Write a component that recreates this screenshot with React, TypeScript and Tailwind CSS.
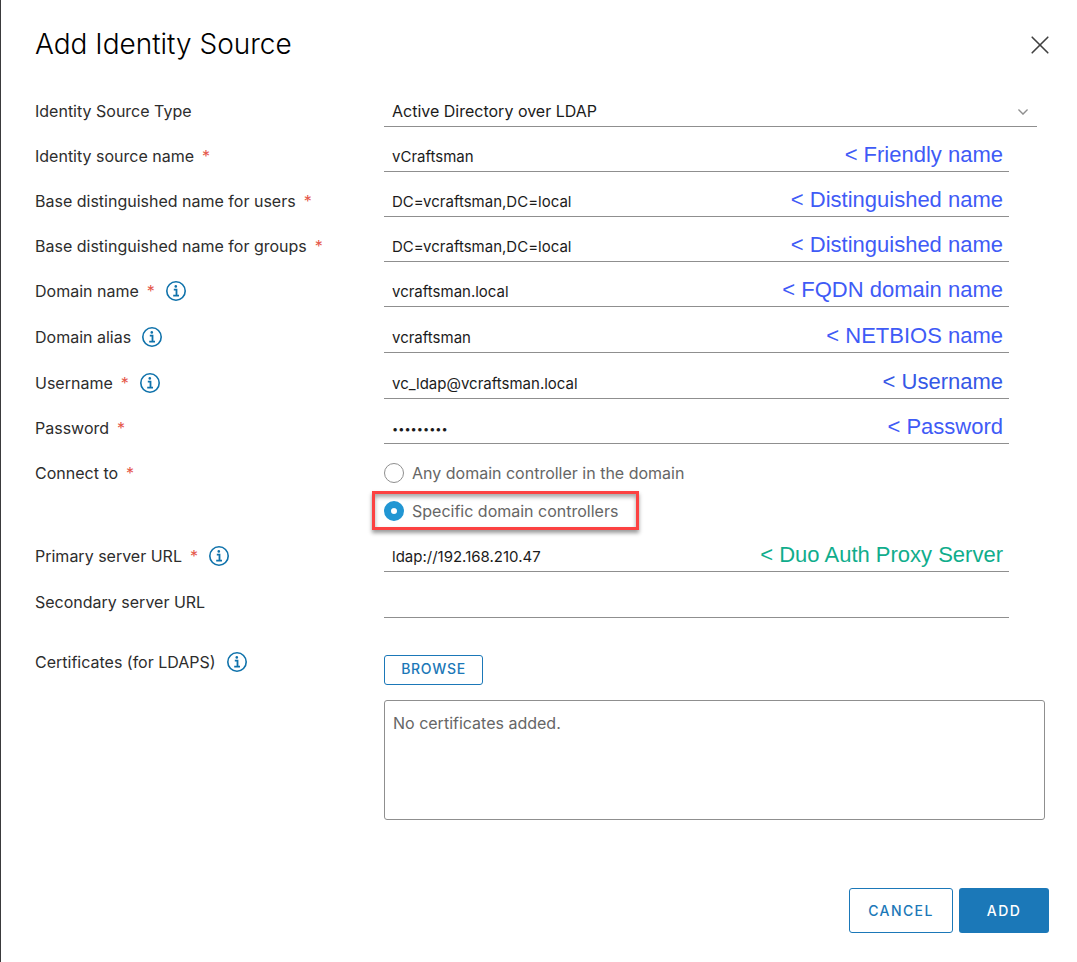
import { useId, useState } from "react";
import type { ReactNode } from "react";

function InfoIcon({ topic }: { topic: string }) {
  return (
    <button type="button" aria-label={`About ${topic}`} className="ml-[11px] shrink-0 text-[#0f72ab]">
      <svg viewBox="0 0 20 20" className="block size-5" fill="none" aria-hidden="true">
        <circle cx="10" cy="10" r="9.2" stroke="currentColor" strokeWidth="1.6" />
        <circle cx="9.8" cy="5.4" r="1.3" fill="currentColor" />
        <path d="M7.8 8.7H10.5V14.4M7.2 14.6H13" stroke="currentColor" strokeWidth="1.8" />
      </svg>
    </button>
  );
}

type CaptionProps = { text: string; required?: boolean; info?: boolean; htmlFor?: string; id?: string };

function Caption({ text, required, info, htmlFor, id }: CaptionProps) {
  const content = (
    <>
      {text}
      {required && <span className="ml-2 text-[#e5574a]">*</span>}
    </>
  );
  return (
    <div className="flex h-6 items-center text-base text-[#2d2d2d]">
      {htmlFor ? <label htmlFor={htmlFor}>{content}</label> : <span id={id}>{content}</span>}
      {info && <InfoIcon topic={text} />}
    </div>
  );
}

function Row({ tall, caption, children }: { tall?: boolean; caption: ReactNode; children: ReactNode }) {
  return (
    <div className={`grid grid-cols-[349px_1fr] items-end ${tall ? "h-[46px]" : "h-[45px]"}`}>
      <div className="pb-1">{caption}</div>
      {children}
    </div>
  );
}

type FieldProps = {
  label: string;
  value: string;
  type?: "text" | "password";
  required?: boolean;
  info?: boolean;
  tall?: boolean;
  note?: string;
  noteColor?: string;
};

function Field({ label, value, type = "text", required, info, tall, note, noteColor = "text-[#3f5bf6]" }: FieldProps) {
  const id = useId();
  return (
    <Row tall={tall} caption={<Caption text={label} required={required} info={info} htmlFor={id} />}>
      <div className="mr-9 flex h-8 items-center border-b border-[#8f8f8f] pr-[6px]">
        <input
          id={id}
          type={type}
          defaultValue={value}
          className={`h-8 min-w-0 flex-1 bg-transparent px-2 pt-[2px] text-[#1b1b1b] outline-none ${type === "password" ? "text-[11px]" : "text-[15px]"}`}
        />
        {note && (
          <span className={`shrink-0 pb-[2px] font-['Liberation_Sans',Arial,sans-serif] text-[22px] leading-7 ${noteColor}`}>
            {note}
          </span>
        )}
      </div>
    </Row>
  );
}

const radioClass =
  "size-5 shrink-0 appearance-none rounded-full border border-[#8f8f8f] bg-white checked:border-[7px] checked:border-[#2196d3]";

export default function App() {
  const [target, setTarget] = useState("specific");
  const typeId = useId();
  const connectId = useId();

  return (
    <main className="flex min-h-screen flex-col border-l border-[#3a3a3c] bg-white pr-7 pb-[29px] pl-[34px] font-[Inter,'Noto_Sans',sans-serif]">
      <header className="flex items-center justify-between pt-6">
        <h1 className="text-[28px] leading-10 font-light text-black">Add Identity Source</h1>
        <button type="button" aria-label="Close" className="pt-[2px] text-[#404040]">
          <svg viewBox="0 0 18 18" className="block size-[18px]" fill="none" stroke="currentColor" strokeWidth="1.6" strokeLinecap="round" aria-hidden="true">
            <path d="M1.2 1.2 16.8 16.8M16.8 1.2 1.2 16.8" />
          </svg>
        </button>
      </header>

      <form className="mt-[18px] flex flex-1 flex-col" onSubmit={(e) => e.preventDefault()}>
        <div className="pr-1">
          <Row caption={<Caption text="Identity Source Type" htmlFor={typeId} />}>
            <div className="mr-2 grid h-8 items-center border-b border-[#8f8f8f]">
              <select
                id={typeId}
                defaultValue="ldap"
                className="col-start-1 row-start-1 h-8 w-full appearance-none bg-transparent px-2 text-base text-[#1b1b1b] outline-none"
              >
                <option value="ldap">Active Directory over LDAP</option>
              </select>
              <svg viewBox="0 0 10 6" className="pointer-events-none col-start-1 row-start-1 mt-[2px] mr-[9px] h-[6px] w-[10px] justify-self-end text-[#8f8f8f]" fill="none" stroke="currentColor" strokeWidth="1.4" aria-hidden="true">
                <path d="M0.4 0.5 5 5.1 9.6 0.5" />
              </svg>
            </div>
          </Row>

          <Field label="Identity source name" required value="vCraftsman" note="< Friendly name" />
          <Field label="Base distinguished name for users" required value="DC=vcraftsman,DC=local" note="< Distinguished name" />
          <Field label="Base distinguished name for groups" required value="DC=vcraftsman,DC=local" note="< Distinguished name" />
          <Field label="Domain name" required info value="vcraftsman.local" note="< FQDN domain name" />
          <Field label="Domain alias" info tall value="vcraftsman" note="< NETBIOS name" />
          <Field label="Username" required info tall value="vc_ldap@vcraftsman.local" note="< Username" noteColor="text-[#3558e6]" />
          <Field label="Password" required type="password" value="craftsman" note="< Password" />

          <div role="radiogroup" aria-labelledby={connectId} className="text-base text-[#666]">
            <Row caption={<Caption id={connectId} text="Connect to" required />}>
              <label className="flex items-center gap-2 pb-1 leading-6">
                <input type="radio" name="target" className={radioClass} checked={target === "any"} onChange={() => setTarget("any")} />
                Any domain controller in the domain
              </label>
            </Row>
            <label className="mt-[2px] ml-[337px] flex h-[39px] w-fit items-center gap-2 border-3 border-[#fc4242] pr-[18px] pl-[9px] leading-6 shadow-[0_3px_4px_rgba(0,0,0,0.4),inset_0_3px_4px_rgba(0,0,0,0.35)]">
              <input type="radio" name="target" className={radioClass} checked={target === "specific"} onChange={() => setTarget("specific")} />
              Specific domain controllers
            </label>
          </div>

          <div className="-mt-1">
            <Field label="Primary server URL" required info tall value="ldap://192.168.210.47" note="< Duo Auth Proxy Server" noteColor="text-[#0fad8c]" />
          </div>
          <Field label="Secondary server URL" tall value="" />

          <section className="mt-8 grid grid-cols-[349px_1fr]">
            <Caption text="Certificates (for LDAPS)" info />
            <div className="pt-[5px]">
              <button type="button" className="h-[30px] w-[99px] rounded-[3px] border border-[#1b78b8] pb-[2px] text-sm font-medium tracking-wider text-[#1b78b8]">
                BROWSE
              </button>
              <div className="mt-[15px] h-[120px] rounded-[3px] border border-[#8f8f8f] px-2 pt-[10px] text-base leading-6 text-[#666]">
                No certificates added.
              </div>
            </div>
          </section>
        </div>

        <footer className="mt-auto flex justify-end gap-[6px] pt-8 text-sm font-medium tracking-widest">
          <button type="button" className="h-[45px] w-[104px] rounded-[3px] border border-[#1b78b8] text-[#1b78b8]">
            CANCEL
          </button>
          <button type="submit" className="h-[45px] w-[90px] rounded-[3px] bg-[#1b78b8] text-white">
            ADD
          </button>
        </footer>
      </form>
    </main>
  );
}
